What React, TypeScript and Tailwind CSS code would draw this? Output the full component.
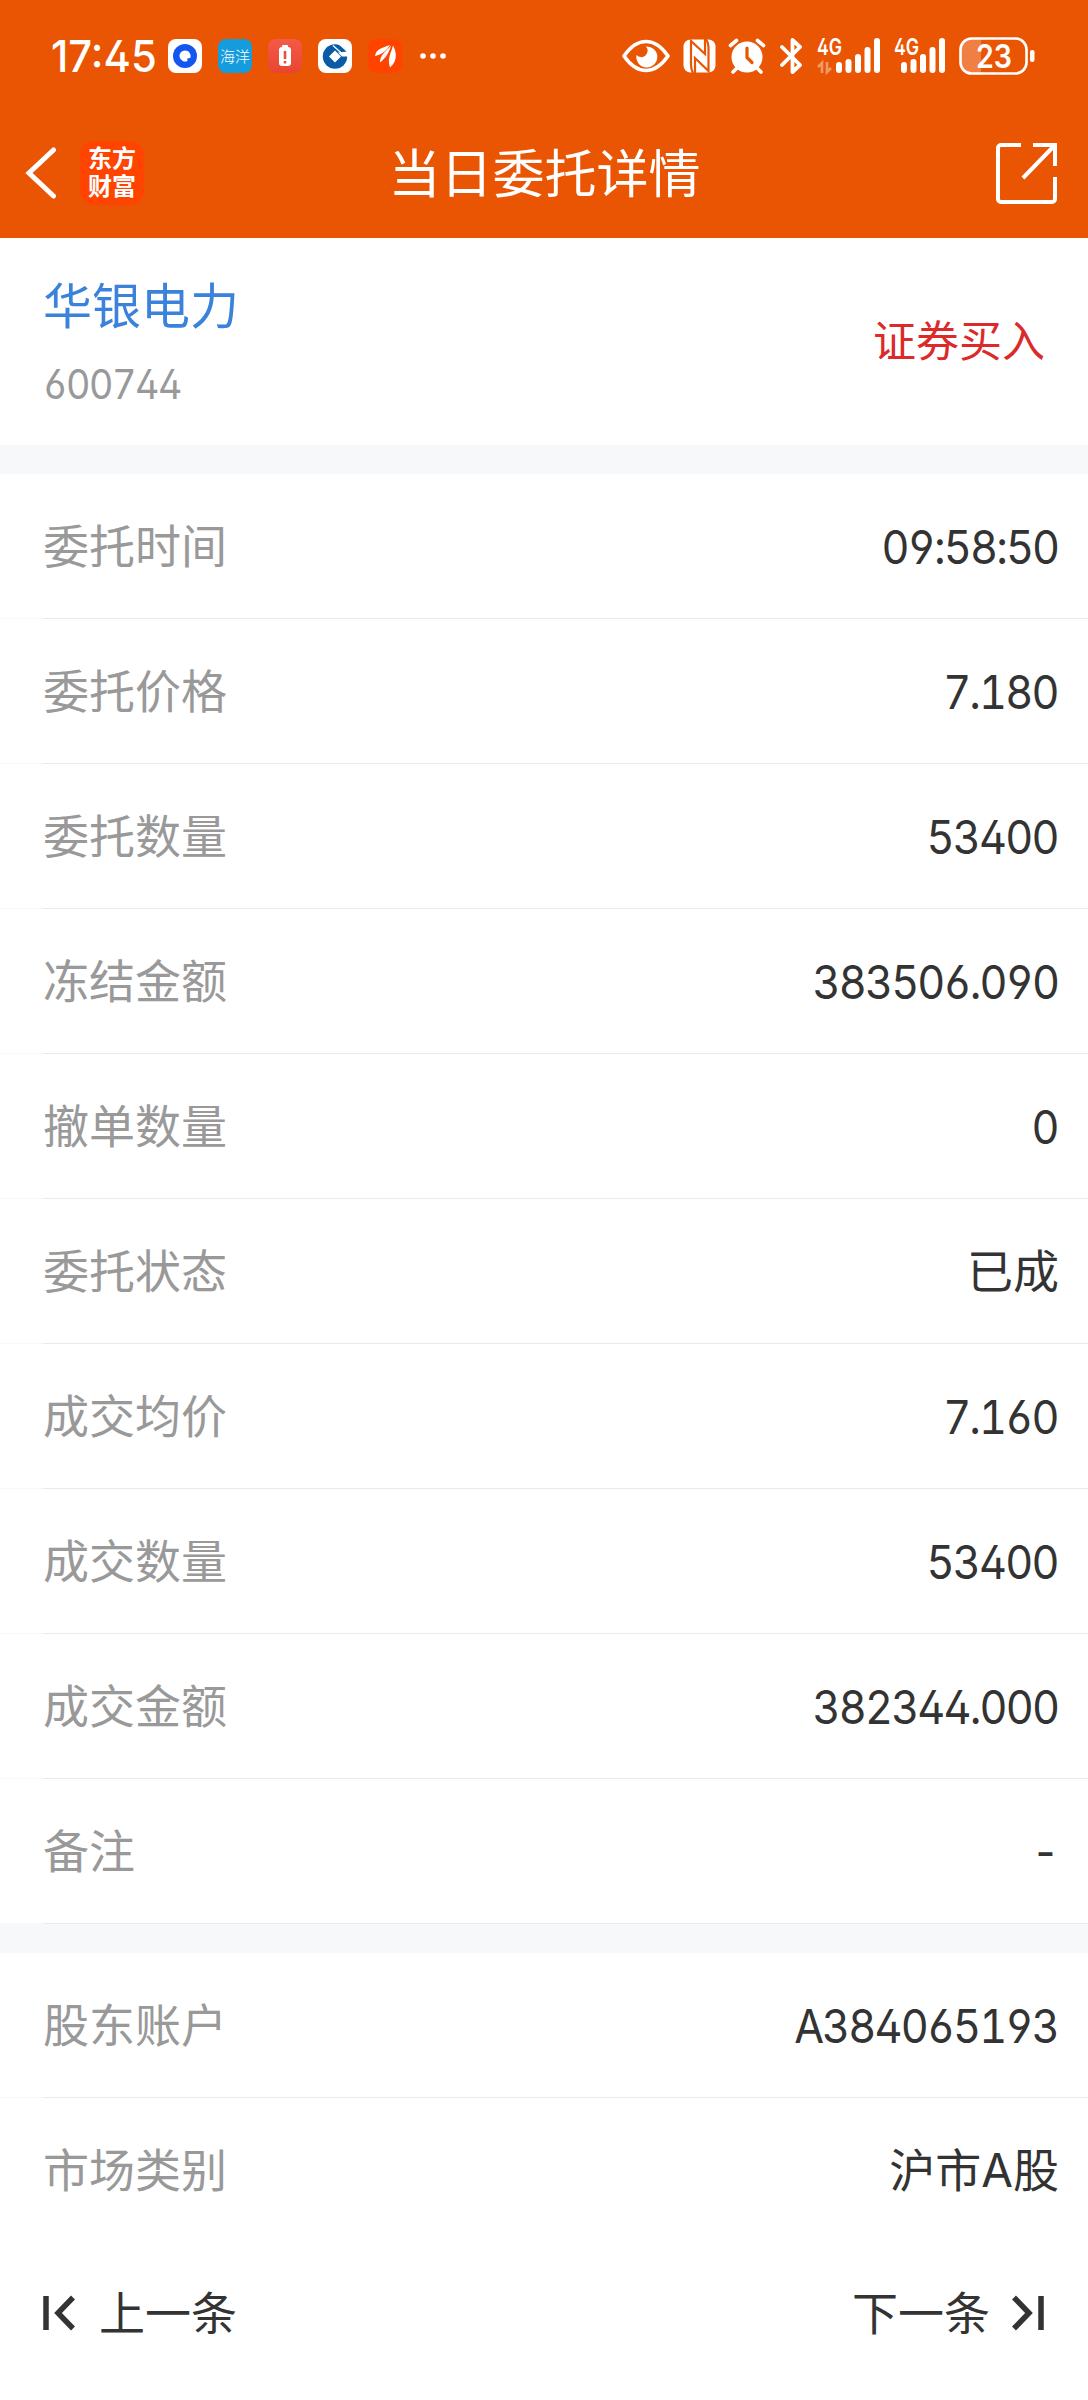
import type { ReactNode } from "react";

type Row = { label: string; value: string; numeric?: boolean };

const orderRows: Row[] = [
  { label: "委托时间", value: "09:58:50", numeric: true },
  { label: "委托价格", value: "7.180", numeric: true },
  { label: "委托数量", value: "53400", numeric: true },
  { label: "冻结金额", value: "383506.090", numeric: true },
  { label: "撤单数量", value: "0", numeric: true },
  { label: "委托状态", value: "已成" },
  { label: "成交均价", value: "7.160", numeric: true },
  { label: "成交数量", value: "53400", numeric: true },
  { label: "成交金额", value: "382344.000", numeric: true },
  { label: "备注", value: "-", numeric: true },
];

const accountRows: Row[] = [
  { label: "股东账户", value: "A384065193", numeric: true },
  { label: "市场类别", value: "沪市A股" },
];

function AppBadge({ className, children }: { className: string; children: ReactNode }) {
  return (
    <div className={`flex size-[34px] items-center justify-center overflow-hidden rounded-[8px] ${className}`}>
      {children}
    </div>
  );
}

function Signal() {
  return (
    <g fill="#fff">
      <rect x="0" y="24" width="6" height="11" rx="3" />
      <rect x="9.5" y="21" width="6" height="14" rx="3" />
      <rect x="19" y="16" width="6" height="19" rx="3" />
      <rect x="28.5" y="9" width="6" height="26" rx="3" />
      <rect x="38" y="0" width="6" height="35" rx="3" />
    </g>
  );
}

function StatusBar() {
  return (
    <div className="flex h-[112px] items-center justify-between pr-[53px] pl-[51px]">
      <div className="flex items-center">
        <span className="w-[117px] origin-left scale-x-[0.95] text-[44px] leading-none font-medium whitespace-nowrap">
          17:45
        </span>
        <div className="flex items-center gap-4">
          <AppBadge className="bg-white">
            <svg width="34" height="34" viewBox="0 0 34 34">
              <circle cx="17" cy="17" r="12" fill="#1456f0" />
              <path d="M17 11.500a5.500 5.500 0 1 0 2.500 10.400l-.3-2.500 3-.3A5.500 5.500 0 0 0 17 11.500z" fill="#fff" />
            </svg>
          </AppBadge>
          <AppBadge className="bg-[#149cdc]">
            <span className="text-[15px] leading-none font-light whitespace-nowrap">海洋</span>
          </AppBadge>
          <AppBadge className="bg-linear-to-b from-[#f45a48] to-[#e8452f]">
            <svg width="34" height="34" viewBox="0 0 34 34">
              <rect x="14" y="6" width="6" height="3" rx="1" fill="#fff" />
              <rect x="11" y="8" width="12" height="19" rx="3" fill="#fff" />
              <path d="M17 12v8M17 22v2.500" stroke="#ee4f3c" strokeWidth="2.600" />
            </svg>
          </AppBadge>
          <AppBadge className="bg-white">
            <svg width="34" height="34" viewBox="0 0 34 34">
              <circle cx="17" cy="17.500" r="12.200" fill="#0b5aa6" />
              <path d="M17 11.500l6 6-6 6-6-6z" fill="#fff" />
              <path d="M20 13.500l4 4h6v-5z" fill="#fff" />
              <path d="M15 6.500l10 9M19 3l10 9" stroke="#fff" strokeWidth="1.300" />
            </svg>
          </AppBadge>
          <AppBadge className="bg-[#ff4400]">
            <svg width="34" height="34" viewBox="0 0 34 34" fill="#fff">
              <path d="M22 6C14 9 8 10 7 17c5-1 11-4 15-11z" />
              <path d="M23 6.500c-5 6-11 9-11 17 5-4 9-9 11-17z" />
              <path d="M25 6.500c-2 8-6 13-3 22 6-5 8-13 3-22z" />
            </svg>
          </AppBadge>
        </div>
        <svg className="ml-[18px]" width="26" height="6" viewBox="0 0 26 6" fill="#fff">
          <circle cx="3" cy="3" r="2.800" />
          <circle cx="13" cy="3" r="2.800" />
          <circle cx="23" cy="3" r="2.800" />
        </svg>
      </div>

      <div className="flex items-center">
        <svg width="48" height="34" viewBox="0 0 48 34" fill="none">
          <path d="M2 17Q12 2.500 24 2.500T46 17Q36 31.500 24 31.500T2 17z" stroke="#fff" strokeWidth="3.600" strokeLinejoin="round" />
          <path d="M24 7.500a10.500 10.500 0 1 1-9.500 8.500 6 6 0 0 0 9.500-8.500z" fill="#fff" />
        </svg>
        <svg className="ml-[13px]" width="33" height="34" viewBox="0 0 33 34">
          <rect x="0.500" y="0.500" width="32" height="33" rx="7" fill="#fff" />
          <g stroke="#ea5504" strokeWidth="2.200" fill="none">
            <path d="M10 34Q8 30 8 26V2L22 15V0" />
            <path d="M23 0Q25.500 4 25.500 8V32L12 19V34" />
          </g>
        </svg>
        <svg className="ml-3" width="38" height="36" viewBox="0 0 38 36" fill="none" stroke="#fff" strokeLinecap="round">
          <circle cx="19" cy="19" r="15.500" fill="#fff" stroke="none" />
          <path d="M2.500 7.500l6-5M35.500 7.500l-6-5M9 30l-4 4M29 30l4 4" strokeWidth="3.600" />
          <path d="M19 10v9.500l5 5" stroke="#ea5504" strokeWidth="3.200" />
        </svg>
        <svg className="ml-[13px]" width="24" height="36" viewBox="0 0 24 36" fill="none">
          <path d="M3 9l18 18-7.500 7V2l7.500 7L3 27" stroke="#fff" strokeWidth="3.800" strokeLinejoin="round" strokeLinecap="round" />
        </svg>
        <div className="ml-[14px] flex">
          <svg className="overflow-visible" width="64" height="36" viewBox="0 0 64 36">
            <text x="0" y="17" fill="#fff" fontSize="23" fontWeight="600" textLength="25" lengthAdjust="spacingAndGlyphs">4G</text>
            <path d="M5 35V25l-4 4M10 24v10l4-4" stroke="#fff" strokeOpacity=".4" strokeWidth="2.600" fill="none" />
            <g transform="translate(19 0)"><Signal /></g>
          </svg>
          <svg className="ml-[13px] overflow-visible" width="52" height="36" viewBox="0 0 52 36">
            <text x="0" y="17" fill="#fff" fontSize="23" fontWeight="600" textLength="25" lengthAdjust="spacingAndGlyphs">4G</text>
            <g transform="translate(7 0)"><Signal /></g>
          </svg>
        </div>
        <svg className="ml-[13px]" width="76" height="38" viewBox="0 0 76 38">
          <path d="M22 2H13A11 11 0 0 0 2 13v12a11 11 0 0 0 11 11h9z" fill="#fff" fillOpacity=".25" />
          <rect x="1.500" y="1.500" width="66" height="35" rx="11" fill="none" stroke="#fff" strokeWidth="2.600" />
          <rect x="71" y="13" width="4.500" height="12" rx="2.200" fill="#fff" />
          <text x="17" y="30.500" fill="#fff" fontSize="32" fontWeight="600" textLength="36" lengthAdjust="spacingAndGlyphs">23</text>
        </svg>
      </div>
    </div>
  );
}

function NavBar() {
  return (
    <div className="flex h-[126px] items-center justify-between pr-[31px] pb-1 pl-[25px]">
      <div className="flex w-[207px] items-center">
        <svg width="32" height="52" viewBox="0 0 32 52" fill="none">
          <path d="M28.500 3L4 26l24.500 23" stroke="#fff" strokeWidth="5" strokeLinecap="round" />
        </svg>
        <div className="ml-[23px] flex size-[64px] flex-col items-center justify-center rounded-[14px] bg-[#ff4400] text-[24px] leading-[28px] font-bold">
          <span>东方</span>
          <span>财富</span>
        </div>
      </div>
      <h1 className="pt-[3px] text-[52px] leading-none">当日委托详情</h1>
      <div className="flex w-[200px] justify-end">
        <svg width="61" height="61" viewBox="0 0 61 61" fill="none" stroke="#fff" strokeWidth="4">
          <path d="M25 2H5a3 3 0 0 0-3 3v51a3 3 0 0 0 3 3h51a3 3 0 0 0 3-3V34" />
          <path d="M37 2h22v21M58 3L27 35" />
        </svg>
      </div>
    </div>
  );
}

function DetailRow({ label, value, numeric, last }: Row & { last?: boolean }) {
  return (
    <div className="relative flex h-[145px] items-center justify-between pr-[29px] pl-[43px]">
      <span className="mb-0.5 text-[46px] leading-none text-[#999]">{label}</span>
      {numeric ? (
        <span className="mr-[-1px] origin-right scale-x-[0.92] pr-[2.4px] text-[47px] leading-none tracking-[-2px] tabular-nums [font-kerning:none]">
          {value}
        </span>
      ) : (
        <span className="mb-0.5 text-[46px] leading-none">{value}</span>
      )}
      {!last && (
        <div className="absolute inset-x-0 bottom-0 flex h-px bg-[#f7f8fa] pl-[43px]">
          <div className="h-px flex-1 bg-[#e9eaec]" />
        </div>
      )}
    </div>
  );
}

export default function App() {
  return (
    <div className="flex h-[2400px] w-[1088px] flex-col overflow-hidden bg-white font-['Inter','Noto_Sans_CJK_SC',sans-serif] text-[#333] [font-feature-settings:'cv02','cv03','cv04']">
      <header className="bg-[#ea5504] text-white">
        <StatusBar />
        <NavBar />
      </header>

      <section className="flex h-[207px] items-center justify-between pr-[43px] pl-[43px]">
        <div className="flex flex-col items-start pt-[7px]">
          <h2 className="text-[49px] leading-[60px] text-[#3b82db]">华银电力</h2>
          <span className="mt-[17px] origin-left scale-x-[0.92] text-[41px] leading-[60px] tracking-[-1.6px] tabular-nums text-[#999] [font-kerning:none]">
            600744
          </span>
        </div>
        <span className="text-[43px] leading-none text-[#dc2a2a]">证券买入</span>
      </section>

      <div className="h-[29px] bg-[#f7f8fa]" />
      <section>
        {orderRows.map((row) => (
          <DetailRow key={row.label} {...row} />
        ))}
      </section>

      <div className="h-[29px] bg-[#f7f8fa]" />
      <section>
        {accountRows.map((row, index) => (
          <DetailRow key={row.label} {...row} last={index === accountRows.length - 1} />
        ))}
      </section>

      <footer className="flex flex-1 items-center justify-between bg-white pr-11 pb-[17px] pl-[43px] text-[46px] leading-none">
        <div className="flex items-center gap-[23px]">
          <svg width="33" height="36" viewBox="0 0 33 36" fill="none" stroke="#333" strokeWidth="5.500">
            <path d="M3 1v34M30 2.500L15 18l15 15.500" />
          </svg>
          <span>上一条</span>
        </div>
        <div className="flex items-center gap-[21px]">
          <span>下一条</span>
          <svg width="33" height="36" viewBox="0 0 33 36" fill="none" stroke="#333" strokeWidth="5.500">
            <path d="M30 1v34M3 2.500L18 18 3 33.500" />
          </svg>
        </div>
      </footer>
    </div>
  );
}
